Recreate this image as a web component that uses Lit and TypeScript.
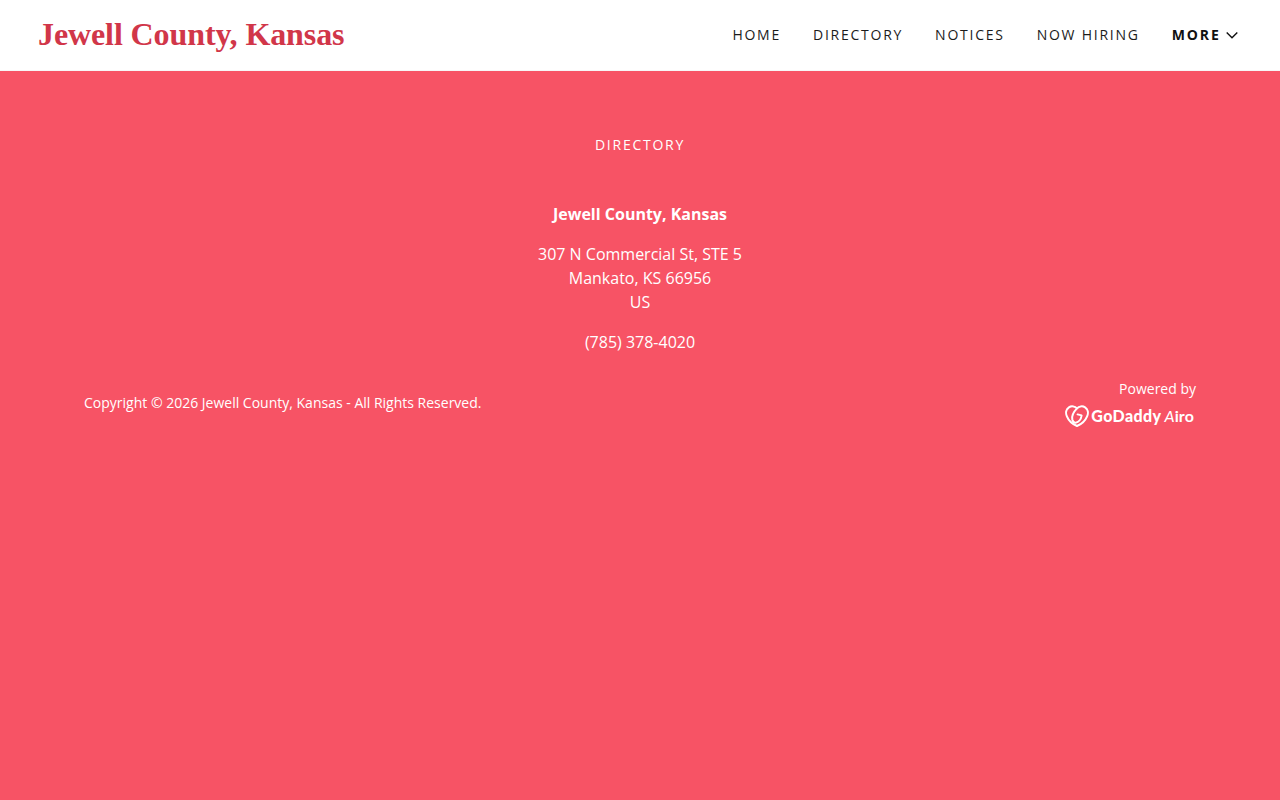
import { LitElement, html, css } from "lit";
import { customElement } from "lit/decorators.js";

@customElement("app-root")
export class AppRoot extends LitElement {
  static styles = css`
    :host { display: block; min-height: 800px; background: #f75365; font-family: "Open Sans", sans-serif; color: #fff; }
    header { height: 70px; background: #fff; display: flex; align-items: center; justify-content: space-between; padding: 0 42px 0 38px; border-bottom: 1px solid #f7f7f7; }
    .brand { font-family: "Liberation Serif", serif; font-weight: 700; font-size: 32px; color: #d13649; line-height: 40px; letter-spacing: -0.1px; margin-top: -2px; }
    nav { display: flex; gap: 32px; align-items: center; }
    nav a { font-size: 14px; letter-spacing: 1.75px; color: #1b1b1b; line-height: 20px; display: flex; align-items: center; }
    nav a.more { font-weight: 700; color: #111; gap: 5.300px; letter-spacing: 1.900px; }
    nav svg { display: block; }
    main { display: flex; flex-direction: column; align-items: center; text-align: center; padding-top: 64px; }
    .label { font-size: 14px; letter-spacing: 1.75px; line-height: 20px; }
    .name { font-weight: 700; font-size: 16px; line-height: 24px; margin-top: 47px; }
    .lines { font-size: 16px; line-height: 24px; margin-top: 16px; }
    .foot { display: flex; justify-content: space-between; align-items: center; padding: 0 84px; margin-top: 25px; }
    .copy { font-size: 14px; line-height: 20px; margin-top: -2px; }
    .power { display: flex; flex-direction: column; align-items: flex-end; font-size: 14px; line-height: 20px; }
    .logo { display: flex; align-items: center; gap: 3px; margin-top: 5px; height: 24px; padding-right: 2px; }
    .logo svg { margin-right: -1px; }
    .gd { font-family: "Lato", sans-serif; font-weight: 900; font-size: 16px; letter-spacing: 0.4px; }
    .airo { font-family: "Lato", sans-serif; font-weight: 700; font-size: 16px; letter-spacing: 0.1px; }
    .airo i { font-weight: 400; }
  `;

  render() {
    return html`
      <header>
        <div class="brand">Jewell County, Kansas</div>
        <nav>
          <a>HOME</a><a>DIRECTORY</a><a>NOTICES</a><a>NOW HIRING</a>
          <a class="more">MORE
            <svg width="12" height="12" viewBox="0 0 12 12" fill="none" stroke="#111" stroke-width="1.4"><path d="M.7 3.500 6 8.800l5.300-5.300"/></svg>
          </a>
        </nav>
      </header>
      <main>
        <div class="label">DIRECTORY</div>
        <div class="name">Jewell County, Kansas</div>
        <div class="lines">307 N Commercial St, STE 5<br />Mankato, KS 66956<br />US</div>
        <div class="lines">(785) 378-4020</div>
      </main>
      <div class="foot">
        <div class="copy">Copyright © 2026 Jewell County, Kansas - All Rights Reserved.</div>
        <div class="power">
          <div>Powered by</div>
          <div class="logo">
            <svg width="24" height="22" viewBox="0 0 24 22" fill="none" stroke="#fff" stroke-width="2" stroke-linecap="round" stroke-linejoin="round">
              <path d="M12 3.400C10 1.300 6.500.6 3.900 2.300 1 4.200.4 8 1.900 11.400 3.600 15.500 7.300 19.200 12 21c4.700-1.800 8.400-5.500 10.100-9.600C23.600 8 23 4.200 20.100 2.300 17.500.6 14 1.300 12 3.400z"/>
              <path d="M12 3.400C8.500 7 6.600 11 7.300 14.500c.5 2.200 1.700 3.400 3.400 3.200 2.800-.3 5.400-3.300 5.900-7.300l-4-1"/>
            </svg>
            <span class="gd">GoDaddy</span><span class="airo"><i>A</i>iro</span>
          </div>
        </div>
      </div>
    `;
  }
}
